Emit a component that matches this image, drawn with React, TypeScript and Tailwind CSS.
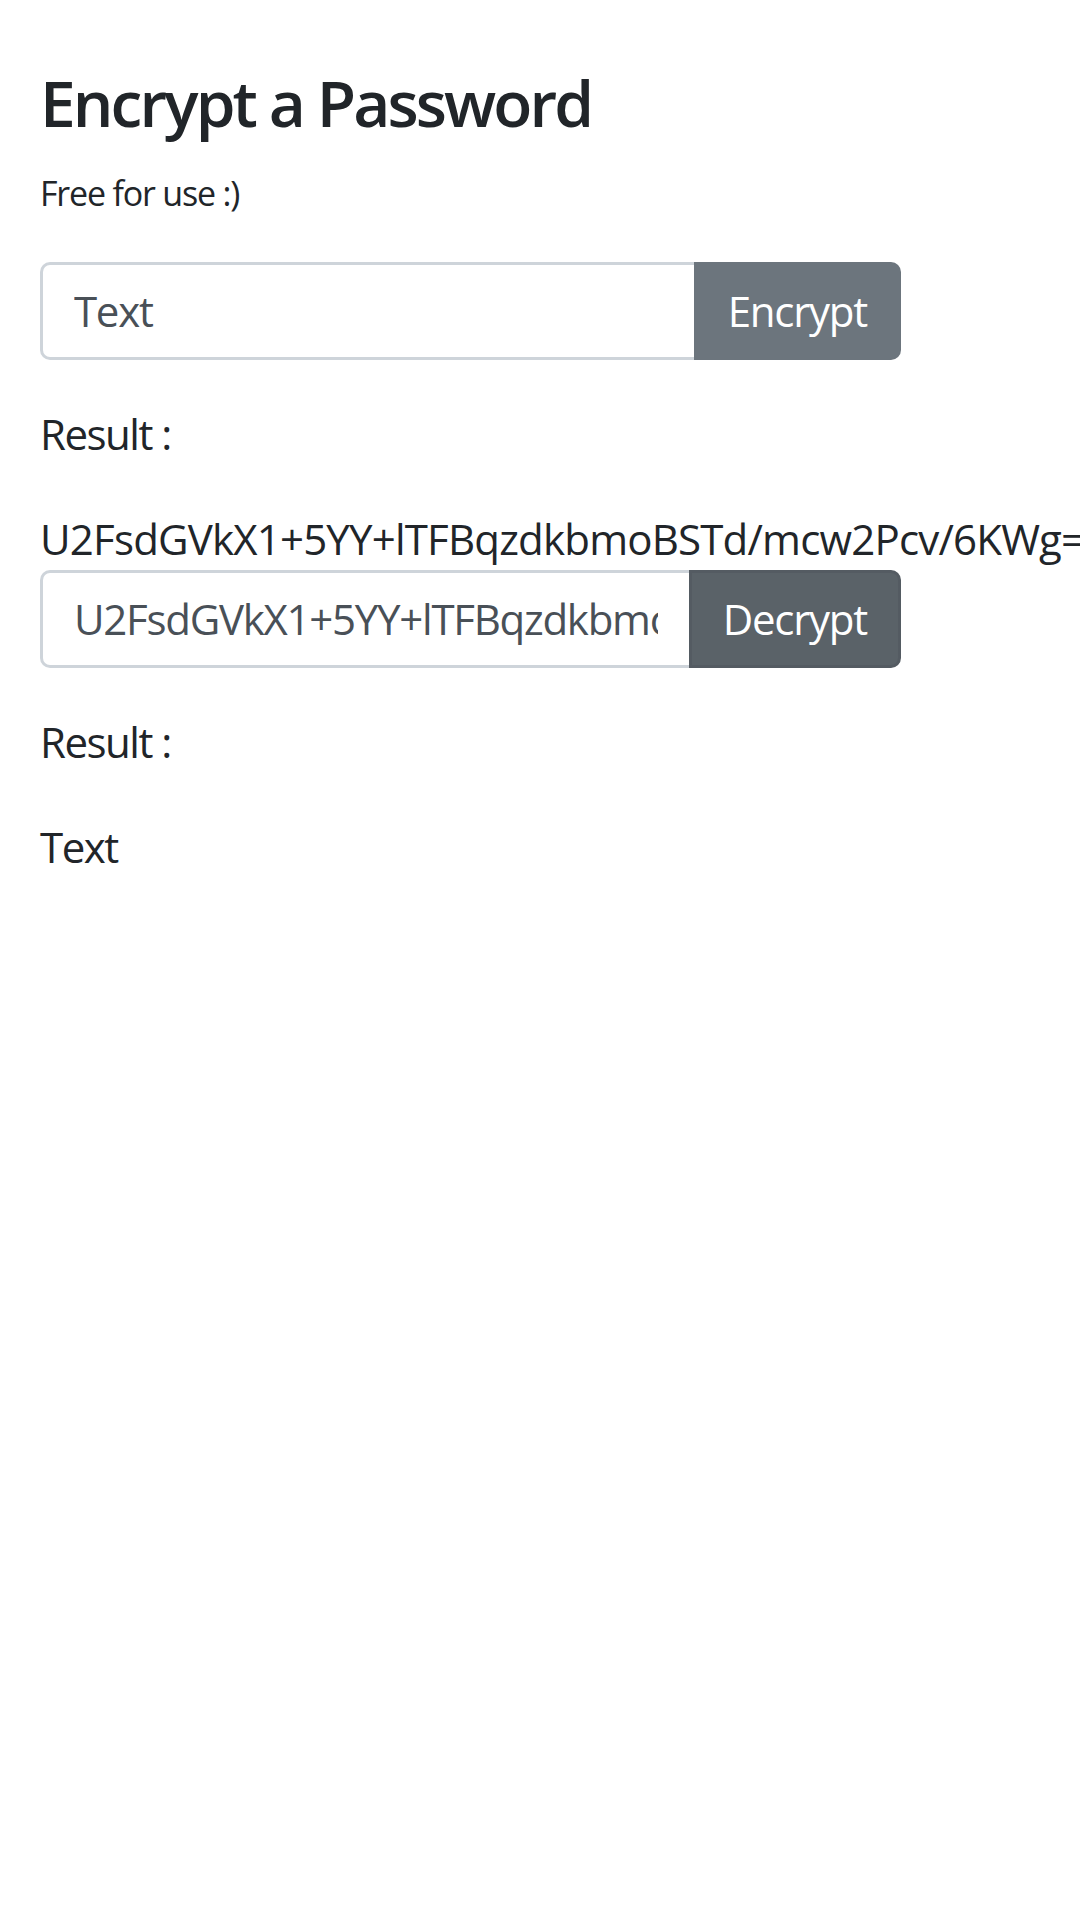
const App = () => {
  return (
    <div className="min-h-screen w-full overflow-hidden bg-white px-[40px] pt-[65px] text-[#212529] font-['Open_Sans',sans-serif]">
      <h1 className="mb-[26px] text-[64px] font-semibold leading-[1.2] tracking-[-0.045em]">Encrypt a Password</h1>
      <p className="mb-[43px] text-[34px] leading-[1.5] tracking-[-0.035em]">Free for use :)</p>

      <div className="mb-[42px] flex h-[98px] w-[861px]">
        <input
          className="min-w-0 flex-1 rounded-l-[10px] border-[3px] border-r-0 border-[#ced4da] px-[31px] text-[42px] tracking-[-0.03em] text-[#495057] outline-none"
          defaultValue="Text"
        />
        <button className="rounded-r-[10px] bg-[#6c757d] px-[34px] text-[42px] tracking-[-0.03em] text-white">Encrypt</button>
      </div>

      <p className="mb-[42px] text-[42px] leading-[1.5] tracking-[-1.5px]">Result :</p>
      <p className="whitespace-nowrap text-[42px] leading-[1.5] tracking-[-0.8px]">U2FsdGVkX1+5YY+lTFBqzdkbmoBSTd/mcw2Pcv/6KWg=</p>

      <div className="mb-[42px] flex h-[98px] w-[861px]">
        <input
          className="min-w-0 flex-1 rounded-l-[10px] border-[3px] border-r-0 border-[#ced4da] px-[31px] text-[42px] tracking-[-0.03em] text-[#495057] outline-none"
          defaultValue="U2FsdGVkX1+5YY+lTFBqzdkbmoBSTd/mcw2Pcv/6KWg="
        />
        <button className="rounded-r-[10px] border-[3px] border-[#545b62] bg-[#5a6268] px-[31px] text-[42px] tracking-[-0.03em] text-white">
          Decrypt
        </button>
      </div>

      <p className="mb-[42px] text-[42px] leading-[1.5] tracking-[-1.5px]">Result :</p>
      <p className="text-[42px] leading-[1.5] tracking-[-1.5px]">Text</p>
    </div>
  );
};

export default App;
